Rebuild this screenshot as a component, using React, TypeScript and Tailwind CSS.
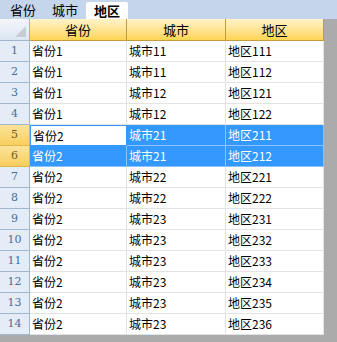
import React from "react";

const rows: [string, string, string][] = [
  ["省份1", "城市11", "地区111"],
  ["省份1", "城市11", "地区112"],
  ["省份1", "城市12", "地区121"],
  ["省份1", "城市12", "地区122"],
  ["省份2", "城市21", "地区211"],
  ["省份2", "城市21", "地区212"],
  ["省份2", "城市22", "地区221"],
  ["省份2", "城市22", "地区222"],
  ["省份2", "城市23", "地区231"],
  ["省份2", "城市23", "地区232"],
  ["省份2", "城市23", "地区233"],
  ["省份2", "城市23", "地区234"],
  ["省份2", "城市23", "地区235"],
  ["省份2", "城市23", "地区236"],
];

const font = { fontFamily: '"Noto Sans CJK SC", "Liberation Sans", sans-serif' };

export default function App() {
  return (
    <div className="w-[337px] h-[342px] bg-[#ababab] overflow-hidden text-[12px] text-black" style={font}>
      <div className="h-[19px] bg-[#c5d6ec] flex items-end text-[13px] pl-[2px]">
        <div className="h-[19px] w-[42px] flex items-center justify-center">省份</div>
        <div className="h-[19px] w-[42px] flex items-center justify-center">城市</div>
        <div className="h-[17px] w-[42px] flex items-center justify-center bg-white font-bold rounded-t-[2px]">地区</div>
      </div>
      <div className="flex w-[324px]">
        <div className="w-[30px] flex flex-col">
          <div className="h-[22px] bg-gradient-to-b from-[#f4f7fb] to-[#dce6f3] border-b border-r border-[#9eb6ce] relative">
            <svg className="absolute right-[3px] bottom-[3px]" width="11" height="11" viewBox="0 0 11 11">
              <polygon points="11,0 11,11 0,11" fill="#c6ccd6" />
            </svg>
          </div>
          {rows.map((_, i) => {
            const sel = i === 4 || i === 5;
            return (
              <div
                key={i}
                className={
                  "h-[21px] flex items-center justify-center border-b border-r text-[11px] " +
                  (sel
                    ? "bg-gradient-to-b from-[#fbe39a] to-[#f8cf5c] border-[#e5b64b] text-[#7a5a20]"
                    : "bg-[#e4ecf7] border-[#9eb6ce] text-[#4a6d98]")
                }
                style={{ fontFamily: '"DejaVu Serif", serif' }}
              >
                {i + 1}
              </div>
            );
          })}
        </div>
        {["省份", "城市", "地区"].map((h, c) => (
          <div key={c} className={"flex flex-col bg-white " + (c === 0 ? "w-[97px]" : c === 1 ? "w-[99px]" : "w-[98px]")}>
            <div className="h-[22px] text-[13px] bg-gradient-to-b from-[#fff3c9] to-[#ffd451] border-b border-r border-[#c39c3e] flex items-center justify-center">
              {h}
            </div>
            {rows.map((r, i) => {
              const sel = i === 4 || i === 5;
              const active = i === 4 && c === 0;
              let cls = "h-[21px] flex items-center pl-[2px] ";
              if (active) cls += "bg-white border border-[#3399ff] pl-[1px]";
              else if (sel) cls += "bg-[#3399ff] text-white border-b border-r border-[#8cc3ff]";
              else cls += "bg-white border-b border-r border-[#e3e3e3]";
              return (
                <div key={i} className={cls}>
                  {r[c]}
                </div>
              );
            })}
          </div>
        ))}
      </div>
    </div>
  );
}
